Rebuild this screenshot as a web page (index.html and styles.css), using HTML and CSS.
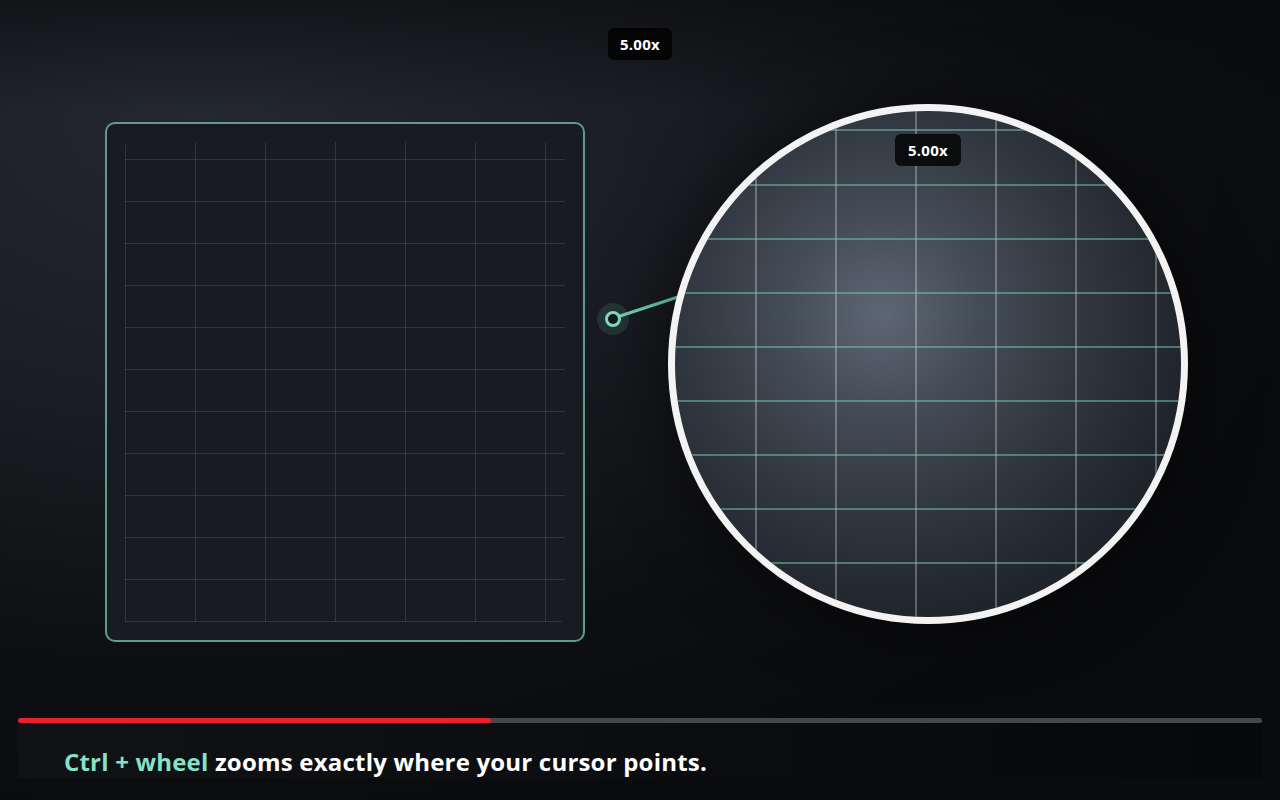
FILE: index.html
```html
<!DOCTYPE html>
<html lang="en">
<head>
<meta charset="UTF-8" />
<meta name="viewport" content="width=device-width, initial-scale=1.0" />
<title>Cursor Zoom Demo</title>
<link rel="stylesheet" href="styles.css">
</head>
<body>
  <div class="stage">
    <div class="top-bar">
      <div class="zoom-badge">5.00x</div>
    </div>

    <div class="scene">
      <div class="canvas-panel">
        <svg class="panel-grid" width="440" height="480" viewBox="0 0 440 480">
          <g stroke="rgba(255,255,255,0.11)" stroke-width="1">
            <line x1="0.5" y1="3" x2="0.5" y2="480" />
            <line x1="70.5" y1="0" x2="70.5" y2="480" />
            <line x1="140.5" y1="0" x2="140.5" y2="480" />
            <line x1="210.5" y1="0" x2="210.5" y2="480" />
            <line x1="280.5" y1="0" x2="280.5" y2="480" />
            <line x1="350.5" y1="0" x2="350.5" y2="480" />
            <line x1="420.5" y1="0" x2="420.5" y2="480" />
            <line x1="0" y1="17.5" x2="440" y2="17.5" />
            <line x1="0" y1="59.5" x2="440" y2="59.5" />
            <line x1="0" y1="101.5" x2="440" y2="101.5" />
            <line x1="0" y1="143.5" x2="440" y2="143.5" />
            <line x1="0" y1="185.5" x2="440" y2="185.5" />
            <line x1="0" y1="227.5" x2="440" y2="227.5" />
            <line x1="0" y1="269.5" x2="440" y2="269.5" />
            <line x1="0" y1="311.5" x2="440" y2="311.5" />
            <line x1="0" y1="353.5" x2="440" y2="353.5" />
            <line x1="0" y1="395.5" x2="440" y2="395.5" />
            <line x1="0" y1="437.5" x2="440" y2="437.5" />
            <line x1="0" y1="479.5" x2="437" y2="479.5" />
          </g>
        </svg>
      </div>

      <!-- cursor pin + leader line to the lens -->
      <svg class="connector" width="100" height="60" viewBox="0 0 100 60">
        <line x1="20" y1="37" x2="84" y2="16" stroke="#6fd0b4" stroke-width="3" />
        <circle cx="16" cy="39" r="16" fill="rgba(110,200,175,0.14)" />
        <circle cx="16" cy="39" r="6.5" fill="#15181b" stroke="#7fdcc0" stroke-width="3" />
      </svg>

      <div class="lens">
        <svg class="lens-grid" width="506" height="506" viewBox="0 0 506 506">
          <g stroke="rgba(255,255,255,0.28)" stroke-width="2">
            <line x1="81" y1="0" x2="81" y2="506" />
            <line x1="161" y1="0" x2="161" y2="506" />
            <line x1="241" y1="0" x2="241" y2="506" />
            <line x1="321" y1="0" x2="321" y2="506" />
            <line x1="401" y1="0" x2="401" y2="506" />
            <line x1="481" y1="0" x2="481" y2="506" />
          </g>
          <g stroke="rgba(120,200,180,0.5)" stroke-width="2">
            <line x1="0" y1="19" x2="506" y2="19" />
            <line x1="0" y1="74" x2="506" y2="74" />
            <line x1="0" y1="128" x2="506" y2="128" />
            <line x1="0" y1="182" x2="506" y2="182" />
            <line x1="0" y1="236" x2="506" y2="236" />
            <line x1="0" y1="290" x2="506" y2="290" />
            <line x1="0" y1="344" x2="506" y2="344" />
            <line x1="0" y1="398" x2="506" y2="398" />
            <line x1="0" y1="452" x2="506" y2="452" />
          </g>
        </svg>
        <div class="zoom-badge lens-badge">5.00x</div>
      </div>
    </div>

    <div class="player">
      <div class="progress">
        <div class="progress-fill" style="width: 38%"></div>
      </div>
      <div class="caption">
        <span class="hl">Ctrl + wheel</span> zooms exactly where your cursor points.
      </div>
    </div>
  </div>
</body>
</html>
```

FILE: styles.css
```css
html, body {
  margin: 0;
  padding: 0;
}

body {
  width: 1280px;
  height: 800px;
  overflow: hidden;
  font-family: 'Open Sans', 'Noto Sans', sans-serif;
  color: #fff;
  background:
    linear-gradient(to bottom, rgba(8,9,11,0.55) 0, rgba(8,9,11,0) 110px),
    radial-gradient(ellipse 1150px 720px at 200px 120px, #24282f 0%, #1a1d22 40%, #0e0f12 75%, #0a0b0d 100%);
}

.stage {
  display: flex;
  flex-direction: column;
  height: 800px;
}

.top-bar {
  display: flex;
  justify-content: center;
  padding-top: 28px;
}

.zoom-badge {
  height: 32px;
  box-sizing: border-box;
  display: flex;
  align-items: center;
  justify-content: center;
  background: #050506;
  border-radius: 6px;
  font-size: 15px;
  font-weight: 700;
  letter-spacing: 0.3px;
  color: #fff;
  width: 64px;
}

/* main row */
.scene {
  position: relative;
  display: flex;
  align-items: flex-start;
  height: 656px;
}

.canvas-panel {
  margin-top: 62px;
  margin-left: 105px;
  width: 480px;
  height: 520px;
  box-sizing: border-box;
  border: 2px solid #5c9c89;
  border-radius: 10px;
  background: #181b20;
  padding: 18px;
}

.panel-grid { display: block; }

.connector {
  position: absolute;
  left: 597px;
  top: 220px;
  z-index: 1;
}

.lens {
  position: relative;
  margin-top: 44px;
  margin-left: 83px;
  width: 520px;
  height: 520px;
  box-sizing: border-box;
  border: 7px solid #f3f3f3;
  border-radius: 50%;
  overflow: hidden;
  z-index: 2;
  background: radial-gradient(circle at 41% 40%, #5d6774 0%, #454d58 22%, #30363f 48%, #20242b 72%, #181b20 100%);
  box-shadow: 0 0 70px rgba(0,0,0,0.55);
}

.lens-grid { display: block; }

.lens-badge {
  position: absolute;
  top: 23px;
  left: 220px;
  width: 66px;
  background: #0b0c0e;
}

/* bottom player */
.player {
  margin: 2px 18px 0;
}

.progress {
  height: 5px;
  background: #46474a;
  border-radius: 3px;
  overflow: hidden;
}

.progress-fill {
  height: 100%;
  background: #ec1f31;
  border-radius: 3px;
}

.caption {
  height: 55px;
  box-sizing: border-box;
  padding: 24px 0 0 46px;
  background: linear-gradient(to right, #101216, #07080a);
  font-size: 24px;
  font-weight: 700;
  letter-spacing: 0.2px;
  line-height: 30px;
  color: #fff;
}

.caption .hl { color: #84e2c6; }
```
